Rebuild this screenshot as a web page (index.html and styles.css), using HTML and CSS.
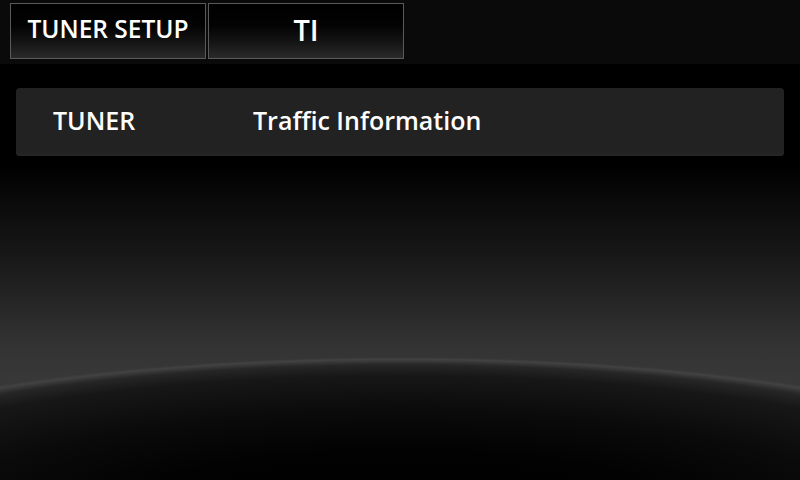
FILE: index.html
```html
<!DOCTYPE html>
<html>
<head>
<meta charset="utf-8">
<link rel="stylesheet" href="styles.css">
</head>
<body>
<div class="screen">
  <div class="header">
    <div class="tab">TUNER SETUP</div>
    <div class="tab tab-title">TI</div>
  </div>
  <div class="content">
    <div class="row">
      <div class="label">TUNER</div>
      <div class="value">Traffic Information</div>
    </div>
  </div>
</div>
</body>
</html>
```
FILE: styles.css
```css
* { box-sizing: border-box; }
html, body { margin: 0; padding: 0; }
body {
  width: 800px;
  height: 480px;
  overflow: hidden;
  font-family: "Open Sans", "DejaVu Sans", sans-serif;
  color: #fff;
  background: #000;
}
.screen {
  width: 800px;
  height: 480px;
  display: flex;
  flex-direction: column;
  background:
    radial-gradient(ellipse 700px 156px at 400px 513px,
      #000 0%, #020202 40%, #0a0a0a 65%, #171717 88%, #262626 95%, #424242 98.5%, rgba(60,60,60,0) 100%),
    linear-gradient(to bottom, #000 0px, #000 165px, #0a0a0a 200px, #161616 250px, #252525 300px, #333 345px, #383838 380px, #2a2a2a 420px, #050505 470px);
}
.header {
  height: 64px;
  display: flex;
  gap: 2px;
  padding: 3px 0 0 10px;
  background: #0a0a0a;
}
.tab {
  width: 196px;
  height: 56px;
  border: 1px solid #5a5a5a;
  background: linear-gradient(to bottom, #000 0%, #030303 40%, #141414 70%, #2a2a2a 100%);
  display: flex;
  align-items: center;
  justify-content: center;
  font-size: 24.5px;
  font-weight: 600;
  padding-bottom: 5px;
}
.tab-title {
  font-size: 29px;
  padding-bottom: 4px;
}
.content {
  padding: 24px 16px 0 16px;
}
.row {
  height: 68px;
  background: #222;
  border-radius: 4px;
  display: flex;
  align-items: center;
  padding-left: 37px;
  padding-bottom: 5px;
  font-size: 25px;
  font-weight: 600;
  box-shadow: inset 0 -2px 0 #262626;
}
.label { width: 200px; }
```
